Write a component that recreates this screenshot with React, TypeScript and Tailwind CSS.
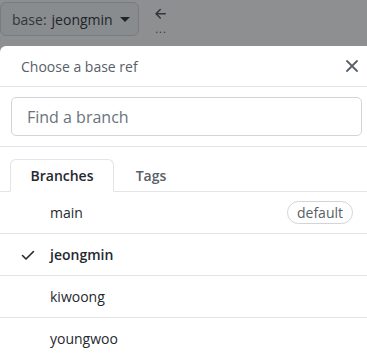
import React from "react";

const branches = [
  { name: "main", isDefault: true, selected: false },
  { name: "jeongmin", isDefault: false, selected: true },
  { name: "kiwoong", isDefault: false, selected: false },
  { name: "youngwoo", isDefault: false, selected: false },
];

const CheckIcon = () => (
  <svg width="16" height="16" viewBox="0 0 16 16" fill="none" stroke="currentColor" strokeWidth="1.6" strokeLinecap="round" strokeLinejoin="round">
    <path d="M2.5 8.5 6 12l7.5-7.5" />
  </svg>
);

const XIcon = () => (
  <svg width="14" height="14" viewBox="0 0 14 14" fill="none" stroke="currentColor" strokeWidth="1.8" strokeLinecap="round">
    <path d="M2 2 12 12M12 2 2 12" />
  </svg>
);

const App: React.FC = () => {
  return (
    <div className="relative w-[367px] h-[355px] overflow-hidden bg-white font-['Open_Sans',sans-serif]">
      {/* page under the overlay */}
      <div className="flex items-start gap-[14px] pt-[2px]">
        <div className="flex items-center h-[34px] w-[139px] pl-[11px] rounded-md border border-[#d5d8db] bg-[#f6f8fa] text-[14px]">
          <span className="text-[#444d56]">base:</span>
          <span className="ml-[5px] text-[#24292e]">jeongmin</span>
          <span className="ml-[7px] w-0 h-0 border-x-[5px] border-x-transparent border-t-[5px] border-t-[#24292e]" />
        </div>
        <div className="flex flex-col items-center text-[#444d56] pt-[4px]">
          <svg width="16" height="16" viewBox="0 0 16 16" fill="currentColor">
            <path d="M7.78 12.53a.75.75 0 0 1-1.06 0L2.47 8.28a.75.75 0 0 1 0-1.06l4.25-4.25a.751.751 0 0 1 1.042.018.751.751 0 0 1 .018 1.042L4.81 7h7.44a.75.75 0 0 1 0 1.5H4.81l2.97 2.97a.75.75 0 0 1 0 1.06Z" />
          </svg>
          <span className="mt-[2px] text-[11px] leading-[10px] tracking-[1px]">...</span>
        </div>
      </div>

      {/* dim overlay */}
      <div className="absolute inset-0 bg-[rgba(27,31,35,0.5)]" />

      {/* select menu */}
      <div className="absolute top-[46px] left-0 w-[373px] rounded-tl-md bg-white shadow-lg">
        <div className="flex items-center justify-between h-[41px] pl-[21px] pr-[14px] border-b border-[#e1e4e8]">
          <span className="text-[14px] text-[#586069]">Choose a base ref</span>
          <span className="text-[#586069]">
            <XIcon />
          </span>
        </div>

        <div className="px-[11px] py-[10px] border-b border-[#e1e4e8]">
          <input
            type="text"
            placeholder="Find a branch"
            className="w-full h-[39px] px-[15px] rounded-[5px] border border-[#d1d5da] text-[16px] text-[#24292e] placeholder-[#6a737d] outline-none"
          />
        </div>

        <div className="flex items-end pl-[10px] pt-[12px] border-b border-[#e1e4e8]">
          <div className="-mb-px h-[33px] w-[104px] flex items-center justify-center rounded-t-md border border-[#e1e4e8] border-b-white bg-white text-[14px] font-semibold text-[#24292e]">
            Branches
          </div>
          <div className="h-[32px] w-[74px] flex items-center justify-center text-[14px] font-semibold text-[#586069]">
            Tags
          </div>
        </div>

        <div>
          {branches.map((b) => (
            <div
              key={b.name}
              className="flex items-center h-[42px] pl-[20px] pr-[20px] border-b border-[#e1e4e8] text-[14px] text-[#24292e]"
            >
              <span className="w-[30px] text-[#24292e]">{b.selected && <CheckIcon />}</span>
              <span className={b.selected ? "font-semibold" : ""}>{b.name}</span>
              {b.isDefault && (
                <span className="ml-auto h-[23px] px-[9px] flex items-center rounded-full border border-[#d1d5da] text-[14px] font-medium text-[#586069]">
                  default
                </span>
              )}
            </div>
          ))}
        </div>
      </div>
    </div>
  );
};

export default App;
